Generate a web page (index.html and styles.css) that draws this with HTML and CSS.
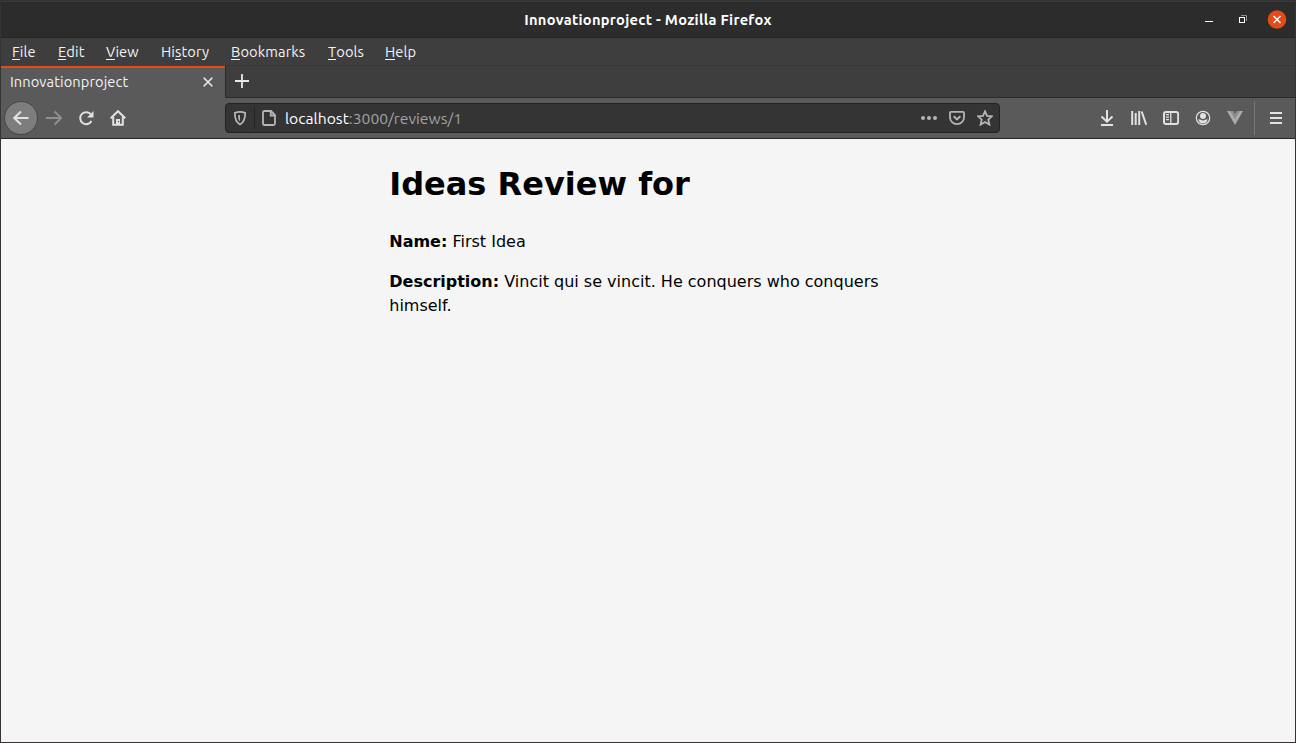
FILE: index.html
```html
<!DOCTYPE html>
<html lang="en">
<head>
<meta charset="utf-8">
<title>Innovationproject</title>
<link rel="stylesheet" href="styles.css">
</head>
<body>
<div class="window">
  <header class="titlebar">
    <div class="title">Innovationproject - Mozilla Firefox</div>
    <div class="controls">
      <svg width="16" height="16" viewBox="0 0 16 16"><path d="M4 9.500h8" stroke="#fff"/></svg>
      <svg width="16" height="16" viewBox="0 0 16 16"><path d="M6 3.500h5.500V9" fill="none" stroke="#8f8f8f"/><rect x="4.500" y="5.500" width="5" height="5" fill="none" stroke="#fff"/></svg>
      <svg width="20" height="20" viewBox="0 0 20 20"><circle cx="10" cy="9.500" r="9.300" fill="#e44b19"/><path d="M6.500 6l7 7M13.500 6l-7 7" stroke="#fff" stroke-width="1.500"/></svg>
    </div>
  </header>
  <nav class="menubar">
    <span class="file"><u>F</u>ile</span><span class="edit"><u>E</u>dit</span><span class="view"><u>V</u>iew</span><span class="history">Hi<u>s</u>tory</span><span class="bookmarks"><u>B</u>ookmarks</span><span class="tools"><u>T</u>ools</span><span class="help"><u>H</u>elp</span>
  </nav>
  <div class="tabs">
    <div class="tab"><span>Innovationproject</span>
      <svg width="16" height="16" viewBox="0 0 16 16"><path d="M3 3l10 10M13 3L3 13" stroke="#e0e0e0" stroke-width="1.800"/></svg>
    </div>
    <div class="tabstrip"><svg width="16" height="16" viewBox="0 0 16 16"><path d="M1 8h14M8 1v14" stroke="#e8e8e8" stroke-width="1.800"/></svg></div>
  </div>
  <div class="toolbar">
    <div class="navigation">
      <div class="back"><svg class="icon" viewBox="0 0 16 16"><path d="M15.500 8H1M8 1.500L1.200 8 8 14.500"/></svg></div>
      <svg class="icon disabled" viewBox="0 0 16 16"><path d="M0 8h15M8.500 1.500L15.200 8l-6.700 6.500"/></svg>
      <svg class="icon" viewBox="0 0 16 16"><path d="M13 4.500A6 6 0 1 0 13.500 11"/><path class="solid" d="M15.500 1v6.500H9z"/></svg>
      <svg class="icon" viewBox="0 0 16 16"><path d="M.7 8.300L8 1.200l7.300 7.100M3.200 7v7.800h9.600V7"/><path class="solid" d="M6 9h4v6H6z"/><path d="M8.500 11v1.200" stroke="#5a5a5a" stroke-width="1"/></svg>
    </div>
    <div class="urlbar">
      <svg class="shield" viewBox="0 0 16 16"><path d="M2.800 2.800C6 1.700 10 1.700 13.200 2.800c0 5-.5 9.300-5.200 11.700C3.300 12.100 2.800 7.800 2.800 2.800z"/><path d="M8 5v6.500c-1.500-1.300-2-3.300-2-6.200z" fill="#b5b5b5" stroke="none"/></svg>
      <i></i>
      <svg class="page" viewBox="0 0 16 16"><path d="M3.500 1H10l4 4v8.500q0 1.500-1.500 1.500h-9Q2 15 2 13.500v-11Q2 1 3.500 1zM9.700 1v4.500H14"/></svg>
      <div class="address"><b>localhost</b>:3000/reviews/1</div>
      <div class="actions">
        <svg viewBox="0 0 16 16"><g fill="#b5b5b5" stroke="none"><circle cx="2" cy="8" r="2"/><circle cx="8" cy="8" r="2"/><circle cx="14" cy="8" r="2"/></g></svg>
        <svg viewBox="0 0 16 16"><path d="M2 1.800h12q1 0 1 1v4.400a7 7 0 0 1-14 0V2.800q0-1 1-1z"/><path d="M4.700 6.200L8 9.400l3.300-3.200" stroke-width="2"/></svg>
        <svg viewBox="0 0 16 16"><path d="M8 1.200l2 4.600 5 .5-3.700 3.300 1.100 5L8 12l-4.400 2.600 1.100-5L1 6.300l5-.5z"/></svg>
      </div>
    </div>
    <div class="tools-right">
      <svg class="icon" viewBox="0 0 16 16"><path d="M8 0v11M2.500 6.500L8 11.700l5.500-5.200"/><path d="M2 15h12"/></svg>
      <svg class="icon" viewBox="0 0 16 16"><path d="M1.200 1v14M4.700 3v12M8.200 1v14M10.700 1.500l4.500 13.300"/></svg>
      <svg class="icon" viewBox="0 0 16 16"><rect x="1" y="2" width="14.200" height="12" rx="2"/><path d="M7.800 2v12" stroke-width="1.300"/><path d="M3 4.700h3M3 7.200h3M3 9.700h3" stroke-width="1.200"/></svg>
      <svg class="icon" viewBox="0 0 16 16"><circle cx="8" cy="8" r="6.700" stroke-width="1.200"/><circle class="solid" cx="8" cy="6" r="3"/><path class="solid" d="M3.400 9.400C5 9 5.700 10.500 8 10.500s3-1.500 4.600-1.100C12 12 10.400 13.300 8 13.300S4 12 3.400 9.400z"/></svg>
      <svg class="icon" viewBox="0 0 16 16"><path d="M0 1h6l2 3.300L10 1h6L8 15z" fill="#acacac" stroke="none"/><path d="M3.200 1H6l2 3.300L10 1h2.800L8 9.300z" fill="#8c8c8c" stroke="none"/></svg>
      <div class="divider"></div>
      <svg class="icon" viewBox="0 0 16 16"><path d="M2 3h12M2 8h12M2 13h12"/></svg>
    </div>
  </div>
  <main class="viewport">
    <article>
      <h1>Ideas Review for</h1>
      <p><strong>Name:</strong> First Idea</p>
      <p><strong>Description:</strong> Vincit qui se vincit. He conquers who conquers himself.</p>
    </article>
  </main>
</div>
</body>
</html>
```
FILE: styles.css
```css
* { box-sizing: border-box; }
body { margin: 0; font: 14.67px/20px "Ubuntu", "Noto Sans", sans-serif; color: #f2f2f2; }
svg { display: block; flex: none; }
.window { height: 743px; display: flex; flex-direction: column; border: 1px solid #353334; border-top-color: #333; background: #f5f5f5; overflow: hidden; }
.titlebar { height: 37px; flex: none; display: grid; grid-template-columns: 1fr auto 1fr; align-items: center; background: #2c2c2c; border-top: 1px solid #3b3b3b; border-bottom: 1px solid #242424; }
.title { grid-column: 2; font-weight: 700; color: #fff; white-space: nowrap; letter-spacing: .28px; }
.controls { display: flex; justify-content: flex-end; align-items: center; gap: 18px; padding-right: 8px; }
.controls svg:last-child { margin-left: -2px; }
.menubar { height: 27px; flex: none; display: flex; padding: 4px 0 0 11px; background: #3e3e3e; letter-spacing: .1px; }
.menubar span { white-space: nowrap; }
.menubar u { text-decoration: none; display: inline-block; height: 18px; line-height: 20px; border-bottom: 1px solid #f2f2f2; vertical-align: top; }
.file { width: 46px; }
.edit { width: 48px; }
.view { width: 55px; }
.history { width: 70px; }
.bookmarks { width: 97px; }
.tools { width: 57px; }
.tabs { height: 33px; flex: none; display: flex; background: #3e3e3e; }
.tab { width: 224px; flex: none; display: flex; align-items: center; justify-content: space-between; padding: 0 9px 2px; border-top: 2px solid #e44b19; margin-top: 1px; background: #5a5a5a; letter-spacing: .08px; }
.tab svg { width: 14px; height: 14px; margin-right: 1px; }
.tabstrip { flex: 1; padding: 8px; border: solid #292929; border-width: 0 0 1px 1px; box-shadow: inset 0 1px #383838; }
.toolbar { height: 41px; flex: none; display: flex; align-items: center; background: #5a5a5a; border-bottom: 1px solid #252525; }
.icon { width: 16px; height: 16px; fill: none; stroke: #e2e2e2; stroke-width: 2; }
.solid { fill: #e2e2e2; stroke: none; }
.disabled { stroke: #909090; }
.navigation { display: flex; align-items: center; gap: 16px; width: 224px; padding-left: 3px; }
.back { width: 34px; height: 34px; flex: none; margin-right: -8px; border: 1px solid #464646; border-radius: 50%; background: #7d7d7d; display: grid; place-items: center; }
.urlbar { width: 775px; height: 30px; display: flex; align-items: center; border: 1px solid #232323; border-radius: 4px; background: #343434; padding: 0 6px; }
.urlbar svg { width: 16px; height: 16px; fill: none; stroke: #b5b5b5; stroke-width: 1.8; }
.urlbar i { width: 1px; height: 22px; background: #232323; margin: 0 6px; }
.address { margin-left: 8px; color: #a2a2a2; font-size: 15.7px; white-space: nowrap; }
.address b { font-weight: 400; color: #fff; }
.actions { display: flex; gap: 12px; margin-left: auto; }
.tools-right { margin-left: auto; display: flex; align-items: center; gap: 16px; padding-right: 11px; }
.divider { width: 1px; height: 34px; background: #777; margin: 0 -2px 0 -5px; }
.tools-right .divider { margin-right: -3px; }
.viewport { flex: 1; color: #000; font: 16px/24px "DejaVu Sans", sans-serif; }
article { width: 517.5px; margin: 0 auto; }
h1 { margin: 21px 0 22px; font-size: 32px; line-height: 48px; }
p { margin: 0 0 16px; }
```
